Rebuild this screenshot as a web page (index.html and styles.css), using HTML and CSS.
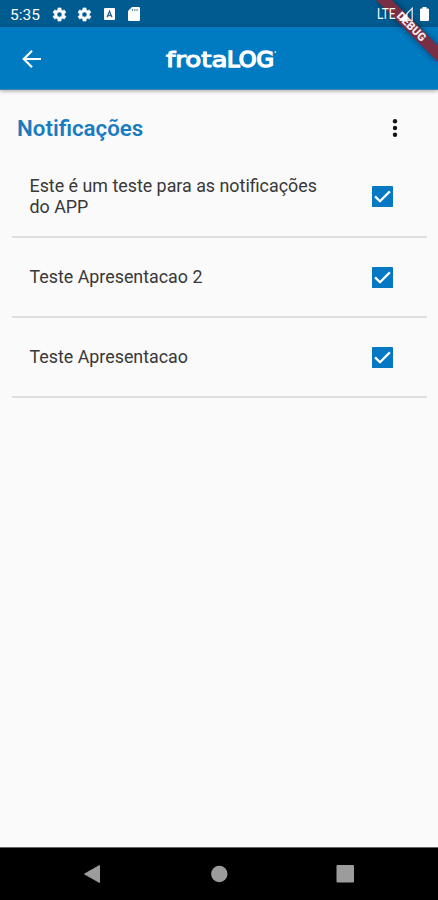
FILE: index.html
```html
<!DOCTYPE html>
<html lang="pt-BR">
<head>
<meta charset="utf-8">
<title>frotaLOG</title>
<link rel="stylesheet" href="styles.css">
</head>
<body>
<div class="screen">
  <div class="status">
    <span class="time"><svg width="32" height="16" viewBox="0 0 32 16"><text x="0" y="13.5" textLength="30" lengthAdjust="spacingAndGlyphs">5:35</text></svg></span>
    <svg class="gear" viewBox="3 2 20 20"><path d="M19.4 13a7.500 7.500 0 0 0 0-2l2.100-1.650-2-3.460-2.500 1a7.300 7.300 0 0 0-1.700-.98L15 3.200h-4l-.4 2.700a7.300 7.300 0 0 0-1.700.98l-2.500-1-2 3.460L6.500 11a7.500 7.500 0 0 0 0 2l-2.100 1.650 2 3.460 2.500-1c.5.400 1.100.7 1.700.98l.4 2.700h4l.4-2.700c.6-.25 1.200-.57 1.700-.98l2.500 1 2-3.460zM13 15.400a3.400 3.400 0 1 1 0-6.800 3.400 3.400 0 0 1 0 6.800z"/></svg>
    <svg class="gear second" viewBox="3 2 20 20"><path d="M19.4 13a7.500 7.500 0 0 0 0-2l2.100-1.650-2-3.460-2.500 1a7.300 7.300 0 0 0-1.700-.98L15 3.200h-4l-.4 2.700a7.300 7.300 0 0 0-1.700.98l-2.500-1-2 3.460L6.500 11a7.500 7.500 0 0 0 0 2l-2.100 1.650 2 3.460 2.500-1c.5.400 1.100.7 1.700.98l.4 2.700h4l.4-2.700c.6-.25 1.200-.57 1.700-.98l2.500 1 2-3.460zM13 15.400a3.400 3.400 0 1 1 0-6.800 3.400 3.400 0 0 1 0 6.800z"/></svg>
    <svg class="app" width="11" height="12" viewBox="0 0 11 12"><rect width="11" height="12" rx="1" fill="#fff"/><path d="M3 9.200 5.500 3.200 8 9.200M3.800 7.500h3.400" fill="none" stroke="#34698e" stroke-width="1.300"/></svg>
    <svg class="card" width="12" height="14" viewBox="0 0 12 14"><path d="M4 0h6.800Q12 0 12 1.200v11.600q0 1.200-1.200 1.200H1.200Q0 14 0 12.800V4z" fill="#fff"/><path d="M4.500 2v2M6.800 2v2M9.100 2v2" stroke="#5c8eb0" stroke-width="1.200"/></svg>
    <span class="lte"><svg width="21" height="18" viewBox="0 0 21 18"><text x="1" y="14" textLength="18.500" lengthAdjust="spacingAndGlyphs">LTE</text></svg></span>
    <svg class="signal" width="14" height="14" viewBox="0 0 14 14"><path d="M8 6.500 13.200 1.300V13.300H8" fill="none" stroke="#dbe4eb" stroke-width="1.300"/><path d="M0 14 8.500 5.500V14z" fill="#fff"/></svg>
    <svg class="battery" width="9" height="14" viewBox="0 0 9 14"><path d="M2.500 0h4v1.500H8q1 0 1 1V13q0 1-1 1H1q-1 0-1-1V2.500q0-1 1-1h1.500z" fill="#fff"/></svg>
  </div>
  <header class="appbar">
    <svg class="back" width="20" height="20" viewBox="0 0 20 20"><path d="M19 10H2.200M10 1.800 1.800 10l8.200 8.200" fill="none" stroke="#fff" stroke-width="2.200"/></svg>
    <svg class="logo" width="114" height="28" viewBox="0 0 114 28"><text x="1" y="21.800" textLength="61.500" lengthAdjust="spacingAndGlyphs">frota</text><text class="caps" x="62" y="21.800" textLength="47" lengthAdjust="spacingAndGlyphs">LOG</text><circle cx="110.300" cy="7" r="1" fill="#b5d7ee"/></svg>
  </header>
  <main class="content">
    <div class="heading">
      <h1>Notificações</h1>
      <svg class="more" width="6" height="20" viewBox="0 0 6 20"><circle cx="3" cy="3.300" r="2.200"/><circle cx="3" cy="10" r="2.200"/><circle cx="3" cy="16.700" r="2.200"/></svg>
    </div>
    <ul class="list">
      <li class="item"><p>Este é um teste para as notificações do APP</p><svg class="check" viewBox="0 0 20 20"><rect width="20" height="20" rx=".8" fill="#0478c2"/><path d="m2.900 9.900 4.700 4.600 9.400-9.400" fill="none" stroke="#fff" stroke-width="2.200"/></svg></li>
      <li class="item"><p>Teste Apresentacao 2</p><svg class="check" viewBox="0 0 20 20"><rect width="20" height="20" rx=".8" fill="#0478c2"/><path d="m2.900 9.900 4.700 4.600 9.400-9.400" fill="none" stroke="#fff" stroke-width="2.200"/></svg></li>
      <li class="item"><p>Teste Apresentacao</p><svg class="check" viewBox="0 0 20 20"><rect width="20" height="20" rx=".8" fill="#0478c2"/><path d="m2.900 9.900 4.700 4.600 9.400-9.400" fill="none" stroke="#fff" stroke-width="2.200"/></svg></li>
    </ul>
  </main>
  <nav class="navbar">
    <svg width="18" height="20" viewBox="0 0 18 20"><path d="M1.500 10 16.500 1.500v17z" fill="#9c9c9c" stroke="#9c9c9c" stroke-linejoin="round"/></svg>
    <svg width="18" height="18" viewBox="0 0 18 18"><circle cx="9.300" cy="9" r="8.200" fill="#9c9c9c"/></svg>
    <svg width="18" height="18" viewBox="0 0 18 18"><rect x=".5" width="17.500" height="17.500" rx="1.200" fill="#9c9c9c"/></svg>
  </nav>
  <svg class="debug" width="70" height="70" viewBox="0 0 70 70">
    <path class="ribbon" d="M8 0h16l46 46v16z"/>
    <text x="0" y="4" transform="translate(43.500 26.500) rotate(45)" text-anchor="middle" textLength="36" lengthAdjust="spacingAndGlyphs">DEBUG</text>
  </svg>
</div>
</body>
</html>
```
FILE: styles.css
```css
* { box-sizing: border-box; }
body { margin: 0; font-family: Roboto, "Liberation Sans", sans-serif; }
svg { display: block; flex: none; }
.screen {
  position: relative;
  display: flex;
  flex-direction: column;
  height: 900px;
  overflow: hidden;
  background: #fafafa;
}
.status {
  display: flex;
  align-items: center;
  height: 27px;
  padding: 1px 8px 0 10px;
  background: #005b91;
}
.status text { fill: #fff; font-size: 15.500px; }
.gear { width: 15px; height: 15px; margin-left: 10px; fill: #fff; }
.gear { overflow: visible; }
.gear path { stroke: #fff; stroke-width: .8; }
.second { margin-left: 10px; }
.app { margin-left: 12px; }
.card { margin-left: 13px; }
.lte { margin-left: auto; }
.lte svg { overflow: visible; }
.lte, .signal, .battery { position: relative; z-index: 2; }
.lte .status text, .lte text { font-size: 14px; }
.signal { margin-left: 2px; }
.battery { margin-left: 7px; margin-right: 1px; }
.appbar {
  display: flex;
  align-items: center;
  height: 63px;
  padding-left: 22px;
  background: #007ac1;
  border-bottom: 1px solid #3c87b6;
  box-shadow: 0 1px 4px rgba(0, 0, 0, .35);
}
.back { margin-top: 1px; }
.logo { margin: 1px 0 0 123px; }
.logo text {
  fill: #fff;
  stroke: #fff;
  stroke-width: 1.100px;
  font-family: "DejaVu Sans", sans-serif;
  font-size: 21px;
}
.logo .caps { stroke-width: 1.500px; }
.content { flex: 1; padding: 0 11px 0 12px; }
.heading {
  display: flex;
  align-items: center;
  justify-content: space-between;
  height: 67px;
  padding: 9px 29.500px 0 5px;
}
h1 { margin: -1px 0 0; color: #1a7bc0; font-size: 22.300px; font-weight: 600; line-height: 28px; }
.more { fill: #151515; }
.list { margin: 0; padding: 0; list-style: none; }
.item {
  display: flex;
  align-items: center;
  justify-content: space-between;
  height: 80px;
  padding: 0 34px 0 17.500px;
  border-bottom: 2px solid #dedede;
}
.item:first-child { height: 81px; }
.item p {
  width: 300px;
  margin: -2px 0 0;
  color: #383838;
  font-size: 17.850px;
  line-height: 21px;
}
.check { width: 21px; height: 21px; }
.navbar {
  display: flex;
  align-items: center;
  justify-content: space-between;
  height: 53px;
  padding: 0 84px 0 83px;
  background: #000;
  border-top: 1px solid #666;
}
.debug { position: absolute; top: 0; right: 0; z-index: 1; }
.ribbon { fill: #792f43; filter: drop-shadow(0 0 3px rgba(0, 0, 0, .5)); }
.debug text { fill: #f4e9ec; font-size: 11.500px; font-weight: 900; }
```
